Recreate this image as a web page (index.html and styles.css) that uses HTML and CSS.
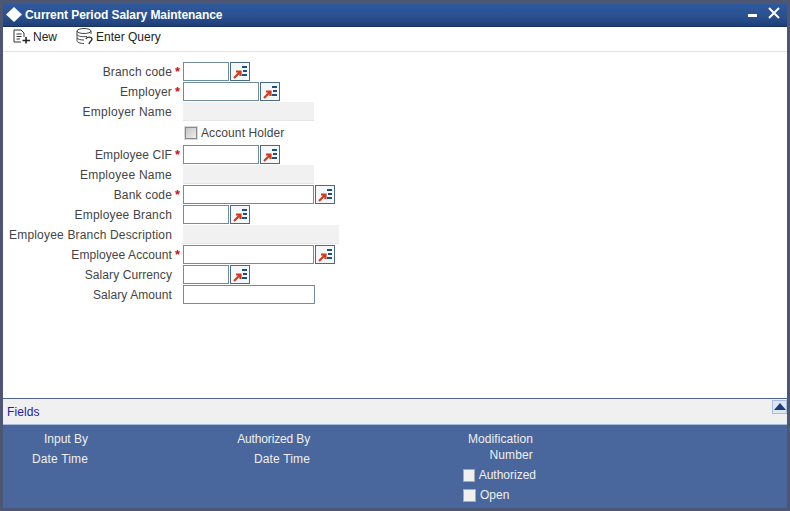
FILE: index.html
```html
<!DOCTYPE html>
<html lang="en">
<head>
    <meta charset="UTF-8">
    <title>Current Period Salary Maintenance</title>
    <link rel="stylesheet" href="styles.css">
</head>
<body>
    <svg width="0" height="0" class="defs">
        <symbol id="lov" viewBox="0 0 18 18">
            <path d="M3 15 L8.5 9.5 M5 8.5 H9.5 V13" fill="none" stroke="#d4391a" stroke-width="2.2"/>
            <path d="M11 3 H16 V5 H11 Z M12 7 H16 V9 H12 Z M11 11 H16 V13 H11 Z" fill="#1d4f80"/>
        </symbol>
    </svg>

    <div class="window">
        <div class="titlebar">
            <svg class="diamond" width="16" height="15" viewBox="0 0 16 15"><path d="M8 0 L16 7.5 L8 15 L0 7.5 Z" fill="#fff"/></svg>
            <span class="title">Current Period Salary Maintenance</span>
            <div class="controls">
                <span class="minimize"></span>
                <svg width="12" height="12" viewBox="0 0 12 12"><path d="M1 1 L11 11 M11 1 L1 11" stroke="#fff" stroke-width="2" fill="none"/></svg>
            </div>
        </div>

        <div class="toolbar">
            <div class="tool tool-new">
                <svg width="18" height="15" viewBox="0 0 18 15">
                    <path d="M8 1 H1 V13 H8 M8 1 L11 4 V8 M3.5 5 H8.5 M3.5 7.5 H8.5 M3.5 10 H7" fill="none" stroke="#333" stroke-width="1"/>
                    <path d="M13 8 V14.5 M9.5 11.5 H17" stroke="#222" stroke-width="1.6" fill="none"/>
                </svg>
                <span>New</span>
            </div>
            <div class="tool">
                <svg width="17" height="17" viewBox="0 0 17 17">
                    <ellipse cx="8" cy="3" rx="7" ry="2.5" fill="none" stroke="#444"/>
                    <path d="M1 3 V12.5 C1 14.5 4 15.5 8 15.5 M15 3 V6 M1 6.5 C2 8.5 7 9 11 8.5 M1 10 C2 11.5 5 12 8 12" fill="none" stroke="#444"/>
                    <path d="M10 11 C11 8.5 15.5 8.5 16 11 C16 13 13.5 13.5 13 16" fill="none" stroke="#333" stroke-width="1.4"/>
                </svg>
                <span>Enter Query</span>
            </div>
        </div>

        <div class="form">
            <div class="row">
                <label>Branch code</label><span class="req">*</span>
                <input class="short" type="text">
                <button class="lov"><svg width="18" height="18"><use href="#lov"/></svg></button>
            </div>
            <div class="row">
                <label>Employer</label><span class="req">*</span>
                <input class="mid" type="text">
                <button class="lov"><svg width="18" height="18"><use href="#lov"/></svg></button>
            </div>
            <div class="row">
                <label class="airy">Employer Name</label><span class="req"></span>
                <div class="readonly"></div>
            </div>
            <div class="row check-row">
                <label></label><span class="req"></span>
                <span class="checkbox"></span><span class="check-text">Account Holder</span>
            </div>
            <div class="row">
                <label class="snug">Employee CIF</label><span class="req">*</span>
                <input class="mid" type="text">
                <button class="lov"><svg width="18" height="18"><use href="#lov"/></svg></button>
            </div>
            <div class="row">
                <label class="airy">Employee Name</label><span class="req"></span>
                <div class="readonly"></div>
            </div>
            <div class="row">
                <label>Bank code</label><span class="req">*</span>
                <input class="long" type="text">
                <button class="lov"><svg width="18" height="18"><use href="#lov"/></svg></button>
            </div>
            <div class="row">
                <label>Employee Branch</label><span class="req"></span>
                <input class="short" type="text">
                <button class="lov"><svg width="18" height="18"><use href="#lov"/></svg></button>
            </div>
            <div class="row">
                <label>Employee Branch Description</label><span class="req"></span>
                <div class="readonly wide"></div>
            </div>
            <div class="row">
                <label class="snug">Employee Account</label><span class="req">*</span>
                <input class="long" type="text">
                <button class="lov"><svg width="18" height="18"><use href="#lov"/></svg></button>
            </div>
            <div class="row">
                <label class="snug">Salary Currency</label><span class="req"></span>
                <input class="short" type="text">
                <button class="lov"><svg width="18" height="18"><use href="#lov"/></svg></button>
            </div>
            <div class="row">
                <label class="snug">Salary Amount</label><span class="req"></span>
                <input class="amount" type="text">
            </div>
        </div>

        <div class="fields-bar">
            <span class="fields-link">Fields</span>
            <button class="collapse"><svg width="12" height="8" viewBox="0 0 12 8"><path d="M6 0 L12 7 H0 Z" fill="#1c3f7c"/></svg></button>
        </div>

        <div class="audit">
            <div class="audit-col col-input">
                <span>Input By</span>
                <span class="spaced">Date Time</span>
            </div>
            <div class="audit-col col-auth">
                <span class="tight">Authorized By</span>
                <span class="spaced">Date Time</span>
            </div>
            <div class="audit-col col-mod">
                <span class="slight">Modification</span>
                <span class="spaced">Number</span>
                <div class="status first"><i class="box"></i>Authorized</div>
                <div class="status"><i class="box"></i>Open</div>
            </div>
        </div>
    </div>
</body>
</html>
```

FILE: styles.css
```css
html, body {
    margin: 0;
    height: 100%;
}

body {
    background: #4d5673;
    font-family: 'Liberation Sans', Arial, sans-serif;
    font-size: 12px;
    color: #333;
    overflow: hidden;
}

.defs {
    display: block;
    height: 0;
}

.window {
    height: 504px;
    margin: 4px 3px 0;
    background: #fff;
    display: flex;
    flex-direction: column;
}

/* Title bar */
.titlebar {
    height: 23px;
    flex: none;
    display: flex;
    align-items: center;
    background: linear-gradient(180deg, #2d5a9e, #2a4f8e 60%, #1f3f78);
    border-bottom: 1px solid #16305f;
    box-sizing: border-box;
    color: #fff;
}

.diamond {
    margin: -2px 3px 0 3px;
}

.title {
    font-weight: bold;
    letter-spacing: -0.06px;
}

.controls {
    margin-left: auto;
    margin-right: 7px;
    display: flex;
    align-items: center;
    gap: 11px;
    margin-top: -4px;
}

.minimize {
    width: 9px;
    height: 3px;
    margin-top: 5px;
    background: #fff;
}

/* Toolbar */
.toolbar {
    height: 25px;
    flex: none;
    display: flex;
    align-items: center;
    gap: 19px;
    padding: 0 0 5px 10px;
    box-sizing: border-box;
    border-bottom: 1px solid #e4e4e4;
    color: #222;
}

.tool {
    display: flex;
    align-items: center;
    gap: 3px;
}

.tool-new {
    gap: 2px;
}

/* Form */
.form {
    flex: 1;
    padding-top: 10px;
}

.row {
    display: flex;
    align-items: flex-start;
    height: 20px;
    line-height: 20px;
    color: #444;
    letter-spacing: 0.18px;
}

.row label {
    width: 169px;
    text-align: right;
}

.row label.snug { letter-spacing: 0.08px; }
.row label.airy { letter-spacing: 0.26px; }

.req {
    width: 11px;
    padding-left: 3px;
    box-sizing: border-box;
    color: #cc1111;
    font-weight: bold;
    font-size: 13px;
}

.row input {
    height: 19px;
    box-sizing: border-box;
    border: 1px solid #6f8ca3;
    background: #fff;
    margin: 0;
    padding: 0;
    outline: none;
}

.short { width: 46px; }
.mid { width: 76px; }
.long { width: 131px; }
.amount { width: 132px; }

.readonly {
    width: 131px;
    height: 19px;
    background: #f1f1f1;
    border-bottom: 1px solid #e6e6e6;
    box-sizing: border-box;
}

.readonly.wide {
    width: 156px;
}

.lov {
    width: 20px;
    height: 19px;
    margin-left: 1px;
    padding: 0;
    border: 1px solid #4a6a86;
    background: #f4f8fb;
    display: flex;
    align-items: center;
    justify-content: center;
}

.check-row {
    height: 23px;
    align-items: center;
    padding-bottom: 1px;
    box-sizing: border-box;
}

.check-text {
    letter-spacing: 0.1px;
}

.checkbox {
    width: 10px;
    height: 10px;
    margin-left: 2px;
    border: 1px solid #8a8a8a;
    outline: 1px solid #d8d8d8;
    background: linear-gradient(135deg, #c4c4c4, #efefef);
    margin-right: 4px;
}

/* Fields bar */
.fields-bar {
    height: 27px;
    flex: none;
    box-sizing: border-box;
    display: flex;
    align-items: center;
    justify-content: space-between;
    padding: 1px 0 0 4px;
    background: #f0f0f0;
    border-top: 1px solid #4e648f;
    border-bottom: 1px solid #a9bcdc;
}

.fields-link {
    color: #2222aa;
    letter-spacing: 0.1px;
}

.collapse {
    width: 15px;
    height: 14px;
    margin-bottom: 11px;
    padding: 0;
    border: 1px solid #a9bcdc;
    background: #dfe6f0;
    display: flex;
    align-items: center;
    justify-content: center;
}

/* Audit */
.audit {
    height: 83px;
    flex: none;
    background: #49669d;
    color: #f0f0f0;
    display: flex;
    padding-top: 7px;
    box-sizing: border-box;
}

.audit-col {
    display: flex;
    flex-direction: column;
    align-items: flex-end;
    gap: 6px;
    line-height: 14px;
}

.spaced { letter-spacing: 0.15px; }
.slight { letter-spacing: 0.08px; }
.tight { letter-spacing: -0.15px; }

.col-input { width: 85px; }
.col-auth { width: 222px; }
.col-mod { width: 223px; gap: 2px; }

.status {
    display: flex;
    align-items: center;
    width: 73px;
    height: 18px;
    margin-right: -3px;
}

.status.first {
    margin-top: 2px;
}

.box {
    width: 11px;
    height: 11px;
    margin-right: 4px;
    background: #f0f0f0;
    border: 1px solid #aaa;
}
```
